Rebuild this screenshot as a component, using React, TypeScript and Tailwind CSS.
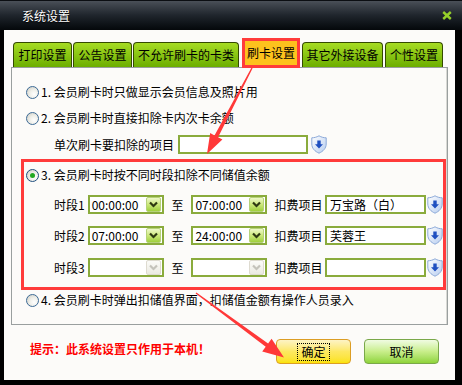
import React from "react";

const FONT = "font-['Noto_Sans_CJK_SC',sans-serif]";

const Radio = ({ checked }: { checked?: boolean }) => (
  <span
    className={
      "relative inline-flex h-[13px] w-[13px] shrink-0 items-center justify-center rounded-full border " +
      (checked
        ? "border-[#1f4f7f] bg-[radial-gradient(circle_at_65%_65%,#ffffff_0%,#eeeee8_45%,#c4c4bc_100%)]"
        : "border-[#3c6a96] bg-[radial-gradient(circle_at_65%_65%,#ffffff_0%,#eeeee8_45%,#c8c8c0_100%)]")
    }
  >
    {checked && <span className="h-[5px] w-[5px] rounded-full bg-[#22a822]" />}
  </span>
);

const Shield = () => (
  <svg width="16" height="19" viewBox="0 0 16 19" className="shrink-0">
    <defs>
      <linearGradient id="shg" x1="0" y1="0" x2="1" y2="1">
        <stop offset="0" stopColor="#ffffff" />
        <stop offset="1" stopColor="#b6ccef" />
      </linearGradient>
    </defs>
    <path
      d="M8 0.8 C5.6 2.2 3.2 2.8 0.8 2.8 V9 C0.8 13.4 4 16.4 8 18.2 C12 16.4 15.2 13.4 15.2 9 V2.8 C12.8 2.8 10.4 2.2 8 0.8 Z"
      fill="url(#shg)"
      stroke="#8ba8d8"
      strokeWidth="1"
    />
    <path d="M6.3 5.5 H9.7 V9.2 H12 L8 13.4 L4 9.2 H6.3 Z" fill="#1f4fc0" />
  </svg>
);

const Chevron = ({ color }: { color: string }) => (
  <svg width="9" height="7" viewBox="0 0 9 7">
    <path d="M1 1.5 L4.5 5 L8 1.5" fill="none" stroke={color} strokeWidth="2.2" />
  </svg>
);

const Combo = ({ value, disabled }: { value?: string; disabled?: boolean }) => (
  <div className="flex h-[19px] w-[76px] shrink-0 items-center border-2 border-[#8aab3c] bg-white pl-[2px] pr-[1px]">
    <span className="flex-1 text-[12px] leading-none text-black">{value}</span>
    {disabled ? (
      <span className="flex h-[15px] w-[15px] items-center justify-center rounded-[2px] border border-[#dedbd0] bg-gradient-to-b from-[#fbfbf8] to-[#ebeae2]">
        <Chevron color="#c4c3bb" />
      </span>
    ) : (
      <span className="flex h-[15px] w-[15px] items-center justify-center rounded-[2px] border border-[#b6d27a] bg-gradient-to-b from-[#eef8c8] via-[#cce87a] to-[#9fd03a]">
        <Chevron color="#2e3a12" />
      </span>
    )}
  </div>
);

const TextBox = ({ value, w }: { value?: string; w: string }) => (
  <div className={"flex h-[19px] shrink-0 items-center border-2 border-[#8aab3c] bg-white pl-[3px] text-[12px] leading-none text-black " + w}>
    {value}
  </div>
);

const Tab = ({ label, w, ml, active }: { label: string; w: string; ml: string; active?: boolean }) =>
  active ? (
    <div
      className={
        "relative z-10 mb-[-1px] flex h-[30px] items-center justify-center border-[3px] border-[#ff3b3b] bg-[#fdc21d] text-[12px] leading-none text-black " +
        w +
        " " +
        ml
      }
    >
      {label}
    </div>
  ) : (
    <div
      className={
        "flex h-[25px] items-center justify-center rounded-t-[4px] border border-b-0 border-[#344a00] bg-gradient-to-b from-[#a6dc22] to-[#6cae00] text-[12px] leading-none text-black " +
        w +
        " " +
        ml
      }
    >
      {label}
    </div>
  );

export default function App() {
  return (
    <div className={"relative h-[385px] w-[462px] overflow-hidden bg-black " + FONT}>
      {/* Title bar */}
      <div className="flex h-[30px] items-center border-t border-[#0b0e12] bg-gradient-to-b from-[#4a5058] via-[#1f252c] to-[#05080b] pl-[22px] pr-[10px]">
        <span className="text-[12px] leading-none text-white [text-shadow:0_1px_1px_#000]">系统设置</span>
        <svg width="10" height="9" viewBox="0 0 10 9" className="ml-auto mt-[-1px]">
          <path d="M1.2 1 L8.8 8 M8.8 1 L1.2 8" stroke="#96d02a" strokeWidth="2.4" />
        </svg>
      </div>

      {/* Body */}
      <div className="ml-[4px] flex h-[350px] w-[451px] flex-col bg-[#fcfbf9] px-[7px] pt-[8px] text-black">
        {/* Tabs */}
        <div className="flex h-[29px] items-end">
          <Tab label="打印设置" w="w-[59px]" ml="ml-[2px]" />
          <Tab label="公告设置" w="w-[59px]" ml="ml-[1px]" />
          <Tab label="不允许刷卡的卡类" w="w-[106px]" ml="ml-[1px]" />
          <Tab label="刷卡设置" w="w-[58px]" ml="ml-[3px]" active />
          <Tab label="其它外接设备" w="w-[81px]" ml="ml-[2px]" />
          <Tab label="个性设置" w="w-[58px]" ml="ml-[2px]" />
        </div>

        {/* Panel */}
        <div className="flex h-[258px] flex-col border border-[#9a9f9f] pt-[11px] shadow-[inset_-1px_0_0_#d8d8d4]">
          <div className="flex h-[26px] items-center pl-[14px]">
            <Radio />
            <span className="ml-[2px] text-[12px] leading-none">1. 会员刷卡时只做显示会员信息及照片用</span>
          </div>
          <div className="flex h-[26px] items-center pl-[14px]">
            <Radio />
            <span className="ml-[2px] text-[12px] leading-none">2. 会员刷卡时直接扣除卡内次卡余额</span>
          </div>
          <div className="mt-[4px] flex h-[19px] items-center pl-[42px]">
            <span className="text-[12px] leading-none">单次刷卡要扣除的项目</span>
            <span className="ml-[4px]">
              <TextBox w="w-[130px]" />
            </span>
            <span className="ml-[3px]">
              <Shield />
            </span>
          </div>

          {/* Highlighted box */}
          <div className="ml-[9px] mt-[5px] flex w-[425px] flex-col border-[3px] border-[#ff3b3b] pb-[10px]">
            <div className="flex h-[26px] items-center pl-[2px]">
              <Radio checked />
              <span className="ml-[2px] text-[12px] leading-none">3. 会员刷卡时按不同时段扣除不同储值余额</span>
            </div>
            {[
              { label: "时段1", a: "00:00:00", b: "07:00:00", item: "万宝路（白）", mt: "mt-[7px]" },
              { label: "时段2", a: "07:00:00", b: "24:00:00", item: "芙蓉王", mt: "mt-[12px]" },
              { label: "时段3", a: "", b: "", item: "", mt: "mt-[13px]", disabled: true },
            ].map((r) => (
              <div key={r.label} className={"flex h-[19px] items-center pl-[30px] " + r.mt}>
                <span className="w-[34px] text-[12px] leading-none">{r.label}</span>
                <Combo value={r.a} disabled={r.disabled} />
                <span className="flex w-[28px] justify-center text-[12px] leading-none">至</span>
                <Combo value={r.b} disabled={r.disabled} />
                <span className="ml-[7px] w-[51px] text-[12px] leading-none">扣费项目</span>
                <TextBox w="w-[101px]" value={r.item} />
                <span className="ml-[1px]">
                  <Shield />
                </span>
              </div>
            ))}
          </div>

          <div className="flex h-[20px] items-center pl-[14px]">
            <Radio />
            <span className="ml-[2px] text-[12px] leading-none">4. 会员刷卡时弹出扣储值界面，扣储值金额有操作人员录入</span>
          </div>
        </div>

        {/* Bottom */}
        <div className="mt-[14px] flex h-[25px] items-center pl-[19px] pr-[9px]">
          <span className="mb-[6px] text-[12px] font-bold leading-none text-[#ff0000]">提示：此系统设置只作用于本机！</span>
          <button className="ml-auto flex h-[25px] w-[75px] items-center justify-center rounded-[4px] border border-[#dc9d24] bg-gradient-to-b from-[#fdf3c4] via-[#fde860] to-[#fbe200] text-[12px] leading-none text-black">
            <span className="border border-dotted border-black px-[3px] py-[2px]">确定</span>
          </button>
          <button className="ml-[13px] flex h-[25px] w-[75px] items-center justify-center rounded-[4px] border border-[#7aa84a] bg-gradient-to-b from-[#f0fbe2] via-[#c8ee8a] to-[#8fd438] text-[12px] leading-none text-black">
            取消
          </button>
        </div>
      </div>

      {/* Annotation arrows */}
      <svg className="pointer-events-none absolute left-0 top-0" width="462" height="385" viewBox="0 0 462 385">
        <polygon
          points="252.6,68.3 218.1,137.2 222.4,139.5 207,154 210.2,133.1 214.5,135.4 251.4,67.7"
          fill="#ff3838"
        />
        <polygon
          points="195.6,293.6 265.7,346.7 262.2,351.4 284,357.5 271.6,338.8 268.1,343.5 196.4,292.4"
          fill="#ff3838"
        />
      </svg>
    </div>
  );
}
